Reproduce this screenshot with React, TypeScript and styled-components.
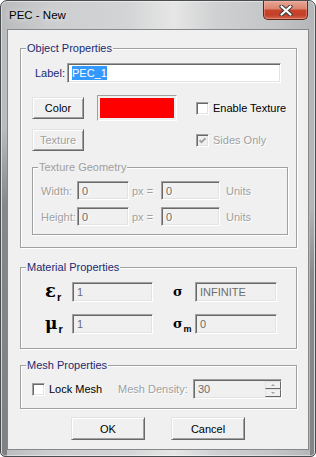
import React from "react";
import styled, { createGlobalStyle } from "styled-components";

const GlobalStyle = createGlobalStyle`
  html, body {
    margin: 0;
    padding: 0;
    background: #ffffff;
  }
  body {
    font-family: "Liberation Sans", Arial, sans-serif;
    font-size: 11px;
    color: #000;
  }
`;

const Window = styled.div`
  box-sizing: border-box;
  width: 316px;
  height: 457px;
  display: flex;
  flex-direction: column;
  padding: 0 6px 6px 6px;
  border: 1px solid #4a4d50;
  border-radius: 7px 7px 5px 5px;
  overflow: hidden;
  box-shadow: inset 0 0 0 1px rgba(255, 255, 255, 0.45);
  background:
    linear-gradient(180deg, rgba(0, 0, 0, 0) 28%, rgba(70, 70, 70, 0.45) 45%, rgba(70, 70, 70, 0.5) 100%) 1px 0 / 5px 100% no-repeat,
    linear-gradient(180deg, rgba(0, 0, 0, 0) 45%, rgba(70, 70, 70, 0.4) 60%, rgba(70, 70, 70, 0.45) 100%) 309px 0 / 4px 100% no-repeat,
    linear-gradient(90deg, #b8babc 0%, #cbcdcf 15%, #d3d4d5 40%, #e6e6e6 55%, #d0d1d2 68%, #c3c4c5 88%, #b3b5b7 100%);
`;

const TitleBar = styled.div`
  height: 28px;
  display: flex;
  justify-content: space-between;
  align-items: flex-start;
  flex-shrink: 0;
`;

const Title = styled.span`
  padding-left: 2px;
  line-height: 28px;
  font-size: 11.5px;
  color: #000;
  text-shadow: 0 0 6px rgba(255, 255, 255, 0.9);
`;

const CloseButton = styled.div`
  box-sizing: border-box;
  width: 45px;
  height: 19px;
  margin-right: 1px;
  border: 1px solid #5e271d;
  border-top: none;
  border-radius: 0 0 5px 5px;
  background: linear-gradient(180deg, #e8a696 0%, #dc8670 42%, #c8452c 52%, #c24129 78%, #d4694f 100%);
  box-shadow: inset 0 0 0 1px rgba(255, 200, 190, 0.35);
  display: flex;
  align-items: center;
  justify-content: center;
`;

const Client = styled.div`
  flex: 1;
  display: flex;
  flex-direction: column;
  padding: 0 11px 0 12px;
  background: #f0f0f0;
  border: 1px solid #85888b;
`;

const Group = styled.div<{ $top: number; $bottom: number; $inset?: string }>`
  margin: ${(p) => p.$top}px ${(p) => p.$inset ?? "0 0 0"};
  padding-bottom: ${(p) => p.$bottom}px;
  border: 1px solid #a0a0a0;
  box-shadow: inset 1px 1px 0 #ffffff, 1px 1px 0 #ffffff;
`;

const GroupTitle = styled.div<{ $disabled?: boolean }>`
  width: fit-content;
  height: 13px;
  line-height: 13px;
  margin: -7px 0 0 5px;
  padding: 0 1px;
  background: #f0f0f0;
  color: ${(p) => (p.$disabled ? "#a0a0a0" : "#1b2a72")};
`;

const LabelRow = styled.div`
  display: flex;
  align-items: center;
  margin: 8px 0 0 14px;
`;

const FieldLabel = styled.span`
  width: 32px;
  color: #1b2a72;
`;

const Edit = styled.div<{ $width: number; $height?: number; $disabled?: boolean }>`
  box-sizing: border-box;
  width: ${(p) => p.$width}px;
  height: ${(p) => p.$height ?? 20}px;
  display: flex;
  align-items: center;
  padding-left: 4px;
  border: 1px solid;
  border-color: #a0a0a0 #ffffff #ffffff #a0a0a0;
  box-shadow: inset 1px 1px 0 #696969, inset -1px -1px 0 #e3e3e3;
  background: ${(p) => (p.$disabled ? "#f0f0f0" : "#ffffff")};
  color: ${(p) => (p.$disabled ? "#6d6d6d" : "#000")};
  white-space: nowrap;
`;

const Selected = styled.span`
  background: #3399ff;
  color: #ffffff;
  line-height: 14px;
`;

const ColorGrid = styled.div`
  display: grid;
  grid-template-columns: 65px 99px 1fr;
  grid-template-rows: 26px 22px;
  row-gap: 8px;
  align-items: center;
  margin: 12px 0 0 11px;
`;

const Button = styled.div<{ $width: number; $height: number; $disabled?: boolean }>`
  box-sizing: border-box;
  width: ${(p) => p.$width}px;
  height: ${(p) => p.$height}px;
  display: flex;
  align-items: center;
  justify-content: center;
  border: 1px solid;
  border-color: #e3e3e3 #696969 #696969 #e3e3e3;
  box-shadow: inset 1px 1px 0 #ffffff, inset -1px -1px 0 #a0a0a0;
  background: #f0f0f0;
  color: ${(p) => (p.$disabled ? "#a0a0a0" : "#000")};
  text-shadow: ${(p) => (p.$disabled ? "1px 1px 0 #ffffff" : "none")};
`;

const Swatch = styled.div<{ $color: string }>`
  box-sizing: border-box;
  width: 80px;
  height: 26px;
  padding: 2px;
  border: 1px solid;
  border-color: #a0a0a0 #ffffff #ffffff #a0a0a0;
  background: ${(p) => p.$color};
  background-clip: content-box;
`;

const CheckRow = styled.label<{ $disabled?: boolean; $width?: number }>`
  display: flex;
  align-items: center;
  gap: 4px;
  width: ${(p) => (p.$width ? `${p.$width}px` : "auto")};
  color: ${(p) => (p.$disabled ? "#a0a0a0" : "#000")};
  text-shadow: ${(p) => (p.$disabled ? "1px 1px 0 #ffffff" : "none")};
`;

const CheckBox = styled.span<{ $disabled?: boolean }>`
  box-sizing: border-box;
  width: 13px;
  height: 13px;
  display: flex;
  align-items: center;
  justify-content: center;
  border: 1px solid;
  border-color: #a0a0a0 #ffffff #ffffff #a0a0a0;
  box-shadow: inset 1px 1px 0 #696969, inset -1px -1px 0 #e3e3e3;
  background: ${(p) => (p.$disabled ? "#f0f0f0" : "#ffffff")};
`;

const GeometryGrid = styled.div`
  display: grid;
  grid-template-columns: 36px 52px 32px 59px auto;
  grid-template-rows: 19px 19px;
  row-gap: 7px;
  align-items: center;
  margin: 7px 0 0 8px;
  color: #a0a0a0;
  text-shadow: 1px 1px 0 #ffffff;
`;

const Unit = styled.span<{ $pad: number }>`
  padding-left: ${(p) => p.$pad}px;
`;

const MaterialGrid = styled.div`
  display: grid;
  grid-template-columns: 27px 81px 20px 22px 82px;
  grid-template-rows: 20px 20px;
  row-gap: 12px;
  align-items: center;
  margin: 8px 0 0 24px;
`;

const Symbol = styled.span<{ $size: number }>`
  font-family: "DejaVu Serif", "Liberation Serif", serif;
  font-weight: bold;
  font-size: ${(p) => p.$size}px;
  line-height: 20px;
  color: #000;
`;

const Sub = styled.span<{ $size?: number }>`
  font-family: "Liberation Sans", Arial, sans-serif;
  font-weight: bold;
  font-size: ${(p) => p.$size ?? 11}px;
  position: relative;
  top: 4px;
  margin-left: 1px;
`;

const MeshRow = styled.div`
  display: flex;
  align-items: center;
  height: 20px;
  margin: 7px 0 0 11px;
`;

const DimLabel = styled.span<{ $width: number }>`
  width: ${(p) => p.$width}px;
  color: #a0a0a0;
  text-shadow: 1px 1px 0 #ffffff;
`;

const SpinStack = styled.div`
  margin-left: auto;
  width: 16px;
  height: 16px;
  display: flex;
  flex-direction: column;
`;

const SpinHalf = styled.div`
  flex: 1;
  box-sizing: border-box;
  display: flex;
  align-items: center;
  justify-content: center;
  border: 1px solid;
  border-color: #e3e3e3 #696969 #696969 #e3e3e3;
  background: #f0f0f0;
`;

const Arrow = styled.span<{ $up?: boolean }>`
  width: 0;
  height: 0;
  border-left: 2px solid transparent;
  border-right: 2px solid transparent;
  ${(p) => (p.$up ? "border-bottom: 2px solid #a0a0a0;" : "border-top: 2px solid #a0a0a0;")}
`;

const ButtonRow = styled.div`
  display: flex;
  justify-content: center;
  gap: 26px;
  margin-top: 8px;
  padding-right: 1px;
`;

function Check({ checked, disabled }: { checked?: boolean; disabled?: boolean }) {
  return (
    <CheckBox $disabled={disabled}>
      {checked && (
        <svg width="7" height="7" viewBox="0 0 7 7">
          <path d="M0.5 3.2 L2.5 5.2 L6.5 1.2" fill="none" stroke={disabled ? "#a0a0a0" : "#000"} strokeWidth="1.8" />
        </svg>
      )}
    </CheckBox>
  );
}

export default function App() {
  return (
    <>
      <GlobalStyle />
      <Window>
        <TitleBar>
          <Title>PEC - New</Title>
          <CloseButton>
            <svg width="14" height="11" viewBox="0 0 14 11">
              <path d="M2.5 1.5 L11.5 9.5 M11.5 1.5 L2.5 9.5" stroke="#3b3b3b" strokeWidth="4.2" strokeLinecap="round" />
              <path d="M2.5 1.5 L11.5 9.5 M11.5 1.5 L2.5 9.5" stroke="#ffffff" strokeWidth="2.2" strokeLinecap="round" />
            </svg>
          </CloseButton>
        </TitleBar>
        <Client>
          <Group $top={18} $bottom={12}>
            <GroupTitle>Object Properties</GroupTitle>
            <LabelRow>
              <FieldLabel>Label:</FieldLabel>
              <Edit $width={214}>
                <Selected>PEC_1</Selected>
              </Edit>
            </LabelRow>
            <ColorGrid>
              <Button $width={52} $height={22}>Color</Button>
              <Swatch $color="#ff0000" />
              <CheckRow>
                <Check />
                Enable Texture
              </CheckRow>
              <Button $width={52} $height={22} $disabled>Texture</Button>
              <span />
              <CheckRow $disabled>
                <Check checked disabled />
                Sides Only
              </CheckRow>
            </ColorGrid>
            <Group $top={16} $bottom={8} $inset="8px 0 11px">
              <GroupTitle $disabled>Texture Geometry</GroupTitle>
              <GeometryGrid>
                <span>Width:</span>
                <Edit $width={52} $height={19} $disabled>0</Edit>
                <Unit $pad={3}>px =</Unit>
                <Edit $width={59} $height={19} $disabled>0</Edit>
                <Unit $pad={6}>Units</Unit>
                <span>Height:</span>
                <Edit $width={52} $height={19} $disabled>0</Edit>
                <Unit $pad={3}>px =</Unit>
                <Edit $width={59} $height={19} $disabled>0</Edit>
                <Unit $pad={6}>Units</Unit>
              </GeometryGrid>
            </Group>
          </Group>

          <Group $top={19} $bottom={14}>
            <GroupTitle>Material Properties</GroupTitle>
            <MaterialGrid>
              <Symbol $size={18}>
                ε<Sub>r</Sub>
              </Symbol>
              <Edit $width={81} $disabled>1</Edit>
              <span />
              <Symbol $size={13}>σ</Symbol>
              <Edit $width={82} $disabled>INFINITE</Edit>
              <Symbol $size={17}>
                μ<Sub>r</Sub>
              </Symbol>
              <Edit $width={81} $disabled>1</Edit>
              <span />
              <Symbol $size={13}>
                σ<Sub $size={9}>m</Sub>
              </Symbol>
              <Edit $width={82} $disabled>0</Edit>
            </MaterialGrid>
          </Group>

          <Group $top={16} $bottom={9}>
            <GroupTitle>Mesh Properties</GroupTitle>
            <MeshRow>
              <CheckRow $width={86}>
                <Check />
                Lock Mesh
              </CheckRow>
              <DimLabel $width={75}>Mesh Density:</DimLabel>
              <Edit $width={89} $disabled>
                30
                <SpinStack>
                  <SpinHalf>
                    <Arrow $up />
                  </SpinHalf>
                  <SpinHalf>
                    <Arrow />
                  </SpinHalf>
                </SpinStack>
              </Edit>
            </MeshRow>
          </Group>

          <ButtonRow>
            <Button $width={74} $height={23}>OK</Button>
            <Button $width={74} $height={23}>Cancel</Button>
          </ButtonRow>
        </Client>
      </Window>
    </>
  );
}
